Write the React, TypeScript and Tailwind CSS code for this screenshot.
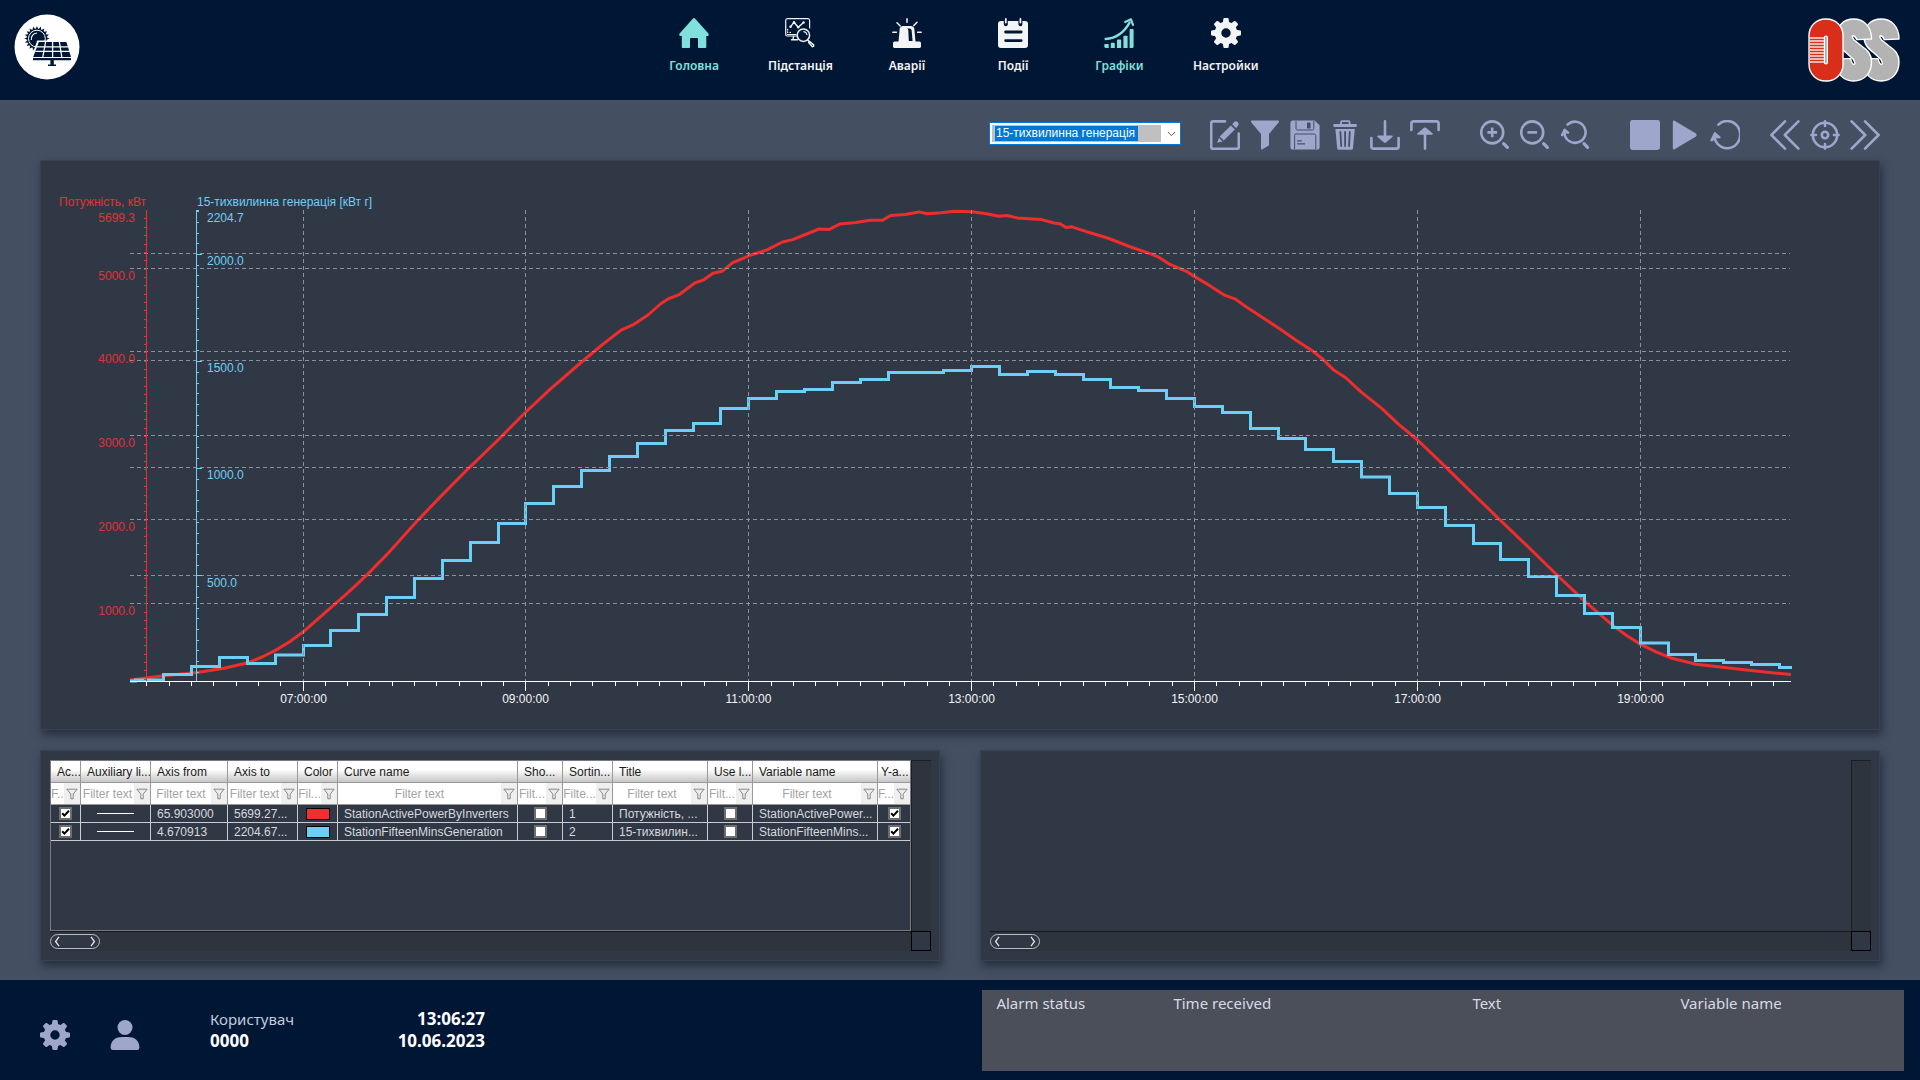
import React from "react";

const NAVY = "#001635";
const SLATE = "#444f62";
const LILAC = "#9ea7cb";
const RED = "#ee2d2d";
const BLUE = "#6ccff6";
const MINT = "#80e0dc";

type IconProps = { className?: string };

function Svg({ children, className = "size-[30px]" }: { children: React.ReactNode; className?: string }) {
  return (
    <svg viewBox="0 0 30 30" className={className} fill="currentColor" stroke="none" aria-hidden="true">
      {children}
    </svg>
  );
}

/* ---------- header icons ---------- */

const HomeIcon = () => (
  <Svg>
    <path d="M15 0Q15.6 0 16.2.7L29.4 15.5Q30.4 18 28.5 18H27.3V29.2Q27.3 30 26.5 30H19.8Q19 30 19 29.2V21Q19 20 18 20H12Q11 20 11 21V29.2Q11 30 10.2 30H3.6Q2.8 30 2.8 29.2V18H1.5Q-.4 18 .6 15.5L13.8.7Q14.4 0 15 0Z" />
  </Svg>
);

const SubstationIcon = () => (
  <Svg>
    <g fill="none" stroke="currentColor" strokeLinecap="round" strokeLinejoin="round">
      <path d="M11 16.5H2.5M.7 9V2.5Q.7.6 2.5.6H22.8Q24.6.6 24.6 2.5V10" strokeWidth="1.2" />
      <path d="M.7 9V16.5Q.7 18 2.2 18H11.5" strokeWidth="1.2" />
      <path d="M2.6 11.5V12M2.6 14V14.4M5 14.4H5.4" strokeWidth="1.3" />
      <path d="M8.5 18.5 8 21.5M6.5 21.8H12.5" strokeWidth="1.4" />
      <path d="M5.5 8.8 9 4.2 13.2 9.2 18.6 4.4" strokeWidth="1.4" />
      <circle cx="18.4" cy="17.2" r="6.2" strokeWidth="1.5" />
      <path d="M18.8 13.6Q21.4 14 22 16.6" strokeWidth="1.1" />
      <path d="M22.6 22 24.2 23.6M24.4 23.2 28.6 26.9Q29.4 28.6 27.4 28.7L23.6 24.6Z" strokeWidth="1.4" />
    </g>
    <g>
      <circle cx="5.5" cy="8.8" r="1.2" />
      <circle cx="9" cy="4.2" r="1.2" />
      <circle cx="13.2" cy="9.2" r="1.2" />
      <circle cx="18.6" cy="4.4" r="1.2" />
    </g>
  </Svg>
);

const AlarmIcon = () => (
  <Svg>
    <path d="M2.5 23.6H27.5Q29 23.8 29 25.3V28.6Q29 30 27.5 30H2.5Q1 30 1 28.6V25.3Q1 23.8 2.5 23.6Z" />
    <path d="M6.5 24 7.7 10.5Q8.2 8 10.8 8H19.2Q21.8 8 22.3 10.5L23.5 24Z" />
    <path d="M15 10.4H17.6Q19.4 10.4 19.6 12.2L20.6 23H16.8L16.3 12Q16.1 10.6 15 10.4Z" fill={NAVY} />
    <path d="M15 .8V4.3M.8 14.3H4.4M25.6 14.3H29.2M5 4.7 8.2 8M25 4.2 21.8 7.6" stroke="currentColor" strokeWidth="1.5" strokeLinecap="round" />
  </Svg>
);

const EventsIcon = () => (
  <Svg>
    <rect x="0" y="3" width="30" height="27" rx="3" />
    <path d="M7.8 2V6.2M22.4 2V6.2" stroke={NAVY} strokeWidth="4" strokeLinecap="round" />
    <path d="M7.8 .9V4.6M22.4 .9V4.6" stroke="currentColor" strokeWidth="1.8" strokeLinecap="round" />
    <path d="M7.6 14H23.2M7.6 22.6H23.2" stroke={NAVY} strokeWidth="2.8" strokeLinecap="round" />
  </Svg>
);

const ChartsIcon = () => (
  <Svg>
    <path d="M.3 26.8Q.3 26 1.1 26H3.9Q4.7 26 4.7 26.8V30H1.6Q.3 30 .3 28.6ZM6.8 25.6Q6.8 24.8 7.6 24.8H10Q10.8 24.8 10.8 25.6V30H6.8ZM13 22.2Q13 21.4 13.8 21.4H16.4Q17.2 21.4 17.2 22.2V30H13ZM19.4 18.6Q19.4 17.8 20.2 17.8H22.8Q23.6 17.8 23.6 18.6V30H19.4ZM25.6 12Q25.6 11 26.6 11H28.6Q29.6 11 29.6 12V28.4Q29.6 30 28.2 30H25.6Z" />
    <path d="M1.6 21Q17 20 25.6 4.6" fill="none" stroke="currentColor" strokeWidth="2.4" strokeLinecap="round" />
    <path d="M21.2 4 27 1.3 29 7" fill="none" stroke="currentColor" strokeWidth="2.2" strokeLinecap="round" strokeLinejoin="round" />
  </Svg>
);

const Gear = ({ className }: IconProps) => (
  <Svg className={className}>
    <circle cx="15" cy="15" r="8" fill="none" stroke="currentColor" strokeWidth="6.6" />
    {[0, 45, 90, 135, 180, 225, 270, 315].map((a) => (
      <path key={a} d="M11.6 6 12.4.8Q12.6 0 13.4 0H16.6Q17.4 0 17.6.8L18.4 6Z" transform={`rotate(${a} 15 15)`} />
    ))}
  </Svg>
);

const Person = () => (
  <Svg>
    <circle cx="15" cy="7.5" r="7.5" />
    <path d="M.6 27.5C.6 20 6 17 12 17H18C24 17 29.4 20 29.4 27.5Q29.4 30 27 30H3Q.6 30 .6 27.5Z" />
  </Svg>
);

/* ---------- toolbar icons ---------- */

const line = { fill: "none", stroke: "currentColor", strokeWidth: 2.6, strokeLinecap: "round", strokeLinejoin: "round" } as const;

const EditIcon = () => (
  <Svg>
    <path {...line} d="M15 1.4H3Q1.2 1.4 1.2 3.2V27Q1.2 28.8 3 28.8H27Q28.8 28.8 28.8 27V13.5" />
    <path d="M9.7 16.6 20.9 5.4 24.9 9.4 13.7 20.6ZM8.9 17.8 12.5 21.4 7.2 22.8ZM22.2 4.2 24.4 1.8Q26 .4 27.8 2Q29.4 3.8 28.2 5.6L26 7.9Z" />
  </Svg>
);

const FilterIcon = () => (
  <Svg>
    <path d="M1.8.6H28.2Q29.6 1 28.6 2.4L19 14V25.2L12.2 29.4Q11 29.8 11 28.4V14L1.4 2.4Q.4 1 1.8.6Z" />
  </Svg>
);

const SaveIcon = () => (
  <Svg>
    <path d="M3 .4H24.6L29.6 5.2V27Q29.6 29.6 27 29.6H3Q.4 29.6 .4 27V3Q.4.4 3 .4Z" />
    <path d="M6 1V8.6Q6 10 7.4 10H22.4Q23.8 10 23.8 8.6V1M4.6 29V15.4Q4.6 14 6 14H24.4Q25.8 14 25.8 15.4V29" fill="none" stroke={SLATE} strokeWidth="1" />
    <rect x="17" y="2.4" width="3.6" height="6" rx=".6" fill={SLATE} />
    <path d="M7.6 20.8H11.4M7.6 23.8H14.6" stroke={SLATE} strokeWidth="1.2" strokeLinecap="round" />
  </Svg>
);

const TrashIcon = () => (
  <Svg>
    <path d="M11 4.6V2.2Q11 1.2 12 1.2H18.6Q19.6 1.2 19.6 2.2V4.6" fill="none" stroke="currentColor" strokeWidth="1.8" />
    <rect x="3.2" y="4" width="23.8" height="3" rx="1.4" />
    <path d="M5.4 9H24.8L23 28.2Q22.8 29.8 21.2 29.8H9Q7.4 29.8 7.2 28.2Z" />
    <path d="M10.4 12 11.2 26M15.1 12V26M19.8 12 19 26" stroke={SLATE} strokeWidth="1.8" strokeLinecap="round" />
  </Svg>
);

const DownloadIcon = () => (
  <Svg>
    <path {...line} d="M1.4 18V26.4Q1.4 28.6 3.6 28.6H26.4Q28.6 28.6 28.6 26.4V18M15 1.4V16" />
    <path d="M8 15.4H22Q23.4 15.8 22.4 17L16 22.4Q15 23.2 14 22.4L7.6 17Q6.6 15.8 8 15.4Z" />
  </Svg>
);

const UploadIcon = () => (
  <Svg>
    <path {...line} d="M1.4 10V3.6Q1.4 1.4 3.6 1.4H26.4Q28.6 1.4 28.6 3.6V10M15 28.6V14" />
    <path d="M8 14.8H22Q23.4 14.4 22.4 13.2L16 7.8Q15 7 14 7.8L7.6 13.2Q6.6 14.4 8 14.8Z" />
  </Svg>
);

const ZoomInIcon = () => (
  <Svg>
    <circle {...line} cx="12.2" cy="12.4" r="11" />
    <path {...line} strokeWidth={3.2} d="M23.6 23.6 27.4 27.4" />
    <path {...line} strokeLinecap="butt" d="M12.2 7.6V17.2M7.4 12.4H17" />
  </Svg>
);

const ZoomOutIcon = () => (
  <Svg>
    <circle {...line} cx="12.2" cy="12.4" r="11" />
    <path {...line} strokeWidth={3.2} d="M23.6 23.6 27.4 27.4" />
    <path {...line} strokeLinecap="butt" d="M7.4 12.4H17" />
  </Svg>
);

const ZoomResetIcon = () => (
  <Svg>
    <path {...line} d="M7.6 4.6A10.6 10.6 0 1 1 4.4 13" />
    <path d="M4 8.6Q4.6 8.2 5.2 8.8L9.4 12.2Q9.8 13.6 8.4 13.8L5.4 13.6 2.4 16.4Q.6 16.4.8 14.8Z" />
    <path {...line} strokeWidth={3.2} d="M24 23.6 27.6 27.4" />
  </Svg>
);

const StopIcon = () => (
  <Svg>
    <rect x="0" y="0" width="30" height="30" rx="2.4" />
  </Svg>
);

const PlayIcon = () => (
  <Svg>
    <path d="M4.6.8 26 13.4Q27.6 15 26 16.6L4.6 29.2Q2.8 30 2.8 28V2Q2.8 0 4.6.8Z" />
  </Svg>
);

const RefreshIcon = () => (
  <Svg>
    <path {...line} d="M8.4 4.6A13 13.6 0 1 1 4.6 18" />
    <path d="M4 12.4Q4.8 11.8 5.6 12.4L10.6 16.8Q11 18.4 9.4 18.6L5.8 18.2 2.4 21.6Q.2 21.8.4 20Z" />
  </Svg>
);

const BackIcon = () => (
  <Svg>
    <path {...line} d="M15 1.4 1.4 15 15 28.6M28.4 1.4 14.8 15 28.4 28.6" />
  </Svg>
);

const ForwardIcon = () => (
  <Svg>
    <path {...line} d="M15 1.4 28.6 15 15 28.6M1.6 1.4 15.2 15 1.6 28.6" />
  </Svg>
);

const TargetIcon = () => (
  <Svg>
    <circle {...line} cx="15" cy="15" r="12.2" />
    <circle {...line} cx="15" cy="15" r="3.2" />
    <path {...line} d="M15 1.4V6M15 24V28.6M1.4 15H6M24 15H28.6" />
  </Svg>
);

/* ---------- logos ---------- */

function SolarLogo() {
  const spikes = Array.from({ length: 20 }, (_, i) => i * 18);
  return (
    <svg viewBox="0 0 66 66" className="size-[66px]" role="img" aria-label="Solar station">
      <circle cx="33" cy="33" r="32.5" fill="#fff" />
      <g fill={NAVY}>
        {spikes.map((a) => (
          <path key={a} d="M21.4 15.4 22.9 12 24.4 15.4Z" transform={`rotate(${a} 22.9 24.6)`} />
        ))}
        <circle cx="22.9" cy="24.6" r="10" />
      </g>
      <circle cx="22.9" cy="24.6" r="8.4" fill="none" stroke="#fff" strokeWidth="1" />
      <path d="M17.4 26A6 6 0 0 1 23 19" fill="none" stroke="#fff" strokeWidth="1.2" />
      <path d="M23.2 26.6H54L59 43.6H17.4Z" fill="#fff" />
      <path d="M24.8 28H52.4L57 43H19.2Z" fill={NAVY} />
      <g stroke="#fff" strokeWidth="1.3">
        <path d="M31.6 28 28.8 43M38.6 28V43M45.4 28 47.8 43" />
        <path d="M23 32.8H54.4M21.4 37.4H56" />
      </g>
      <path d="M19 44H57V46.2H19ZM36.4 46.2H39.8V50.4H42V52H34V50.4H36.4Z" fill={NAVY} />
    </svg>
  );
}

const S_SHAPE =
  "M91 21C91 8 83 1 73 1C63 1 56 8 56 19C56 27 61 31 66 35L73 41.6Q75.4 46 73.4 46.4Q71.6 46.4 70 40.6H56V45C56 56 63 63 73 63C84 63 91 55 91 44C91 36 87 32 81 28L73.6 22Q70.6 18 72.6 17.8Q74.8 18 76.4 21.6Z";

function OssLogo() {
  return (
    <svg viewBox="0 0 92 64" className="h-16 w-[92px]" role="img" aria-label="OSS">
      <g fill="#b3b3b3" stroke="#fff" strokeWidth="1.4" strokeLinejoin="round">
        <path d={S_SHAPE} />
        <path d={S_SHAPE} transform="translate(-27.5 0)" />
      </g>
      <rect x="1" y="1" width="34" height="62" rx="16.5" fill="#d92f1a" stroke="#fff" strokeWidth="1.4" />
      <rect x="16.4" y="18" width="3" height="28" rx="1.5" fill="#a9b0ba" stroke="#fff" strokeWidth="1.2" />
      <path d="M2 20H16M2 23H16M2 26H16M2 29H16M2 32H16M2 35H16M2 38H16M2 41H16M2 44H16" stroke="#f3e3df" strokeWidth="1.3" />
    </svg>
  );
}

/* ---------- chart ---------- */

const X0 = 303;
const HOUR = 111.43;
const TOP = 210;
const BASE = 681.5;

const STEP_LEVELS = [
  680, 674.5, 666.5, 657.5, 663.5, 655, 645.5, 630.5, 614.5, 597.5, 578.5, 560.5, 542.5, 523.5, 503.5, 486.5, 470.5,
  456.5, 443.5, 430.5, 423.5, 408.5, 398.5, 391.5, 389.5, 382.5, 379.5, 372.5, 372.5, 370.5, 366.5, 374.5, 371.5, 374.5,
  379.5, 387.5, 390.5, 398.5, 406.5, 412.5, 428.5, 438.5, 449.5, 461.5, 477, 493.5, 507.5, 525.5, 543.5, 559.5, 576.5,
  595.5, 613.5, 627.5, 643, 654.5, 660.5, 662.5, 664.5, 667.5,
];

const POWER_POINTS =
  "130,680 162,676 197,672.5 224,668.3 248,662.8 262,657 275.5,650.4 290,641.5 303.3,631.8 325.7,612.2 346,594.3 366.5,575.4 387,554.4 417.5,520.6 442,495.1 468.6,468.3 497,441 525.3,412.5 550,389.4 581,362.5 603.3,343.9 621.6,329.8 634,324.3 648,315 660.4,304 668,299 679,294.7 694.7,283 703,280.2 713,273.3 722,271.3 732.7,262.7 741.6,259 748.6,255.8 767,249.9 782.4,242 792.7,239.6 819,229 829.4,229.4 839.6,224.1 856,222.4 870,220.3 882.4,220.3 890.6,215.5 905,214.4 919,211.9 927,213.7 941.6,212.7 954,211.2 972,211.7 986.5,213.7 999,216.2 1007,215.5 1017,217.9 1041.6,219.6 1054,223 1060,223.7 1066,227.5 1072,226.8 1088.6,232.3 1109,238.5 1129.4,246.5 1150,253.7 1158,256.8 1170,264.4 1186.5,271.3 1194.3,276.4 1211,286.4 1225,295.4 1235.5,299.2 1248,308.1 1264,318.4 1280,329 1296,340.2 1312.7,351 1323,359.4 1333,369.4 1346,378 1361.6,392.3 1382,408.6 1398.4,424.1 1417.6,440 1445.3,466.7 1471.8,492.6 1500.4,520.3 1529,547.7 1556.7,574.7 1584,600.6 1612.7,625.4 1627,635.7 1640.4,644.2 1655.5,651.6 1672,658.3 1696,664.2 1729,668 1760,671.6 1791,674.6";

const RED_LABELS: [string, number][] = [
  ["5699.3", 222],
  ["5000.0", 280],
  ["4000.0", 363],
  ["3000.0", 447],
  ["2000.0", 531],
  ["1000.0", 615],
];

const BLUE_LABELS: [string, number][] = [
  ["2204.7", 222],
  ["2000.0", 265],
  ["1500.0", 372],
  ["1000.0", 479],
  ["500.0", 587],
];

function stepPath() {
  const w = HOUR / 4;
  const start = X0 - 6 * w;
  let d = "M130 681";
  STEP_LEVELS.forEach((y, i) => {
    d += `H${Math.floor(start + i * w) + 0.5}V${y}`;
  });
  return d + "H1792";
}

function TrendChart() {
  const hGrid = [253.5, 268.5, 351.5, 360.5, 435.5, 467.5, 519.5, 575.5, 603.5];
  const hours = [7, 9, 11, 13, 15, 17, 19];
  const hourX = (h: number) => Math.floor(X0 + (h - 7) * HOUR) + 0.5;
  const minor = Array.from({ length: 75 }, (_, i) => Math.floor(X0 + (i - 7) * (HOUR / 5)) + 0.5).filter((x) => x < 1790);
  const redTicks = Array.from({ length: 56 }, (_, i) => Math.round(BASE - ((i + 1) * 100 - 65.9) * 0.08368) + 0.5);
  const blueTicks = Array.from({ length: 44 }, (_, i) => Math.round(BASE - ((i + 1) * 50 - 4.67) * 0.21427) + 0.5);
  return (
    <svg
      viewBox="41 161 1838 568"
      className="block h-auto w-full font-['Liberation_Sans',Arial,sans-serif] text-[12px]"
      role="img"
      aria-label="Потужність і 15-тихвилинна генерація"
    >
      <polyline points={POWER_POINTS} fill="none" stroke={RED} strokeWidth="3" strokeLinejoin="round" />
      <path d={stepPath()} fill="none" stroke={BLUE} strokeWidth="3" />
      <g stroke="#87939f" strokeWidth="1" strokeDasharray="4 3" fill="none">
        {hGrid.map((y) => (
          <path key={y} d={`M130 ${y}H1790`} />
        ))}
        {hours.map((h) => (
          <path key={h} d={`M${hourX(h)} ${TOP}V681`} />
        ))}
      </g>
      <g stroke={RED} strokeWidth="1">
        <path d={`M146.5 ${TOP}V681`} />
        {redTicks.map((y) => (
          <path key={y} d={`M144 ${y}H146`} />
        ))}
      </g>
      <g stroke={BLUE} strokeWidth="1">
        <path d={`M196.5 ${TOP}V681M197 210.5H199`} />
        {blueTicks.map((y, i) => (
          <path key={y} d={(i + 1) % 10 === 0 ? `M197 ${y}H202` : `M197 ${y}H199`} />
        ))}
      </g>
      <g stroke="#fff" strokeWidth="1">
        <path d={`M130 ${BASE}H1791`} />
        {minor.map((x) => (
          <path key={x} d={`M${x} 682V686`} />
        ))}
        {hours.map((h) => (
          <path key={h} d={`M${hourX(h)} 682V691`} />
        ))}
      </g>
      <g fill="#e03236" textAnchor="end">
        <text x="146" y="206">Потужність, кВт</text>
        {RED_LABELS.map(([t, y]) => (
          <text key={t} x="135" y={y}>
            {t}
          </text>
        ))}
      </g>
      <g fill="#6ccff6">
        <text x="197" y="206">15-тихвилинна генерація [кВт г]</text>
        {BLUE_LABELS.map(([t, y]) => (
          <text key={t} x="207" y={y}>
            {t}
          </text>
        ))}
      </g>
      <g fill="#f3f4f6" textAnchor="middle">
        {hours.map((h) => (
          <text key={h} x={hourX(h)} y="703">
            {`${String(h).padStart(2, "0")}:00:00`}
          </text>
        ))}
      </g>
    </svg>
  );
}

/* ---------- curve table ---------- */

type Column = { title: string; width: string; label: string; filter: string };

const COLUMNS: Column[] = [
  { title: "Active", label: "Ac...", width: "w-[30px]", filter: "F..." },
  { title: "Auxiliary line", label: "Auxiliary li...", width: "w-[70px]", filter: "Filter text" },
  { title: "Axis from", label: "Axis from", width: "w-[77px]", filter: "Filter text" },
  { title: "Axis to", label: "Axis to", width: "w-[70px]", filter: "Filter text" },
  { title: "Color", label: "Color", width: "w-[40px]", filter: "Fil..." },
  { title: "Curve name", label: "Curve name", width: "w-[180px]", filter: "Filter text" },
  { title: "Show", label: "Sho...", width: "w-[45px]", filter: "Filt..." },
  { title: "Sorting", label: "Sortin...", width: "w-[50px]", filter: "Filte..." },
  { title: "Title", label: "Title", width: "w-[95px]", filter: "Filter text" },
  { title: "Use line", label: "Use l...", width: "w-[45px]", filter: "Filt..." },
  { title: "Variable name", label: "Variable name", width: "w-[125px]", filter: "Filter text" },
  { title: "Y-axis", label: "Y-a...", width: "", filter: "F..." },
];

const ROWS = [
  { from: "65.903000", to: "5699.27...", swatch: "bg-[#f0302f]", name: "StationActivePowerByInverters", sort: "1", title: "Потужність, ...", variable: "StationActivePower..." },
  { from: "4.670913", to: "2204.67...", swatch: "bg-[#6ccff6]", name: "StationFifteenMinsGeneration", sort: "2", title: "15-тихвилин...", variable: "StationFifteenMins..." },
];

function Tick({ checked, label }: { checked?: boolean; label: string }) {
  return (
    <span className="relative mx-auto block size-[13px] bg-[#6e6e6e] p-[2px]">
      <input
        type="checkbox"
        defaultChecked={checked}
        aria-label={label}
        className="peer block size-[9px] appearance-none bg-white"
      />
      <svg viewBox="0 0 9 9" className="pointer-events-none absolute top-[2px] left-[2px] hidden size-[9px] peer-checked:block" aria-hidden="true">
        <path d="M1.2 4.2 3.4 6.6 8 1.8" fill="none" stroke="#000" strokeWidth="2" />
      </svg>
    </span>
  );
}

function FunnelGlyph() {
  return (
    <svg viewBox="0 0 12 12" className="size-3" fill="#ececec" stroke="#8a8a8a" strokeWidth="1" aria-hidden="true">
      <path d="M.8 1.2H11.2L7.2 6V10.8H4.8V6Z" />
    </svg>
  );
}

const cell = "truncate border-r border-b border-[#c9ccd1] pl-[6px]";

function CurveTable() {
  return (
    <table className="w-full table-fixed border-separate border-spacing-0 text-[12px] leading-[14px]">
      <colgroup>
        {COLUMNS.map((c) => (
          <col key={c.title} className={c.width} />
        ))}
      </colgroup>
      <thead>
        <tr>
          {COLUMNS.map((c) => (
            <th
              key={c.title}
              scope="col"
              className="h-[22px] overflow-hidden border-r border-b border-[#999] bg-linear-to-b from-white from-40% to-[#c6c6c6] pl-[6px] text-left font-normal whitespace-nowrap text-[#1a1a1a] last:border-r-0 last:pl-[3px]"
            >
              {c.label}
            </th>
          ))}
        </tr>
        <tr>
          {COLUMNS.map((c) => (
            <td key={c.title} className="h-[22px] border-r border-b border-[#999] bg-white p-0 last:border-r-0">
              <div className="flex h-[21px] items-stretch">
                <input
                  type="text"
                  placeholder={c.filter}
                  aria-label={`Filter ${c.title}`}
                  className="w-0 min-w-0 flex-1 bg-white text-center placeholder:text-[#a3a3a3]"
                />
                <button type="button" aria-label={`Filter options ${c.title}`} className="flex w-4 shrink-0 items-center justify-center bg-[#efefef]">
                  <FunnelGlyph />
                </button>
              </div>
            </td>
          ))}
        </tr>
      </thead>
      <tbody className="text-[#d6d9de]">
        {ROWS.map((r) => (
          <tr key={r.name} className="h-[18px]">
            <td className="border-r border-b border-[#c9ccd1]">
              <Tick checked label={`Active ${r.name}`} />
            </td>
            <td className="border-r border-b border-[#c9ccd1]">
              <hr className="mx-auto w-[37px] border-t border-white" />
            </td>
            <td className={cell}>{r.from}</td>
            <td className={cell}>{r.to}</td>
            <td className="border-r border-b border-[#c9ccd1]">
              <div className={`mx-auto h-3 w-6 border border-black ${r.swatch}`} />
            </td>
            <td className={cell}>{r.name}</td>
            <td className="border-r border-b border-[#c9ccd1]">
              <Tick label={`Show ${r.name}`} />
            </td>
            <td className={cell}>{r.sort}</td>
            <td className={cell}>{r.title}</td>
            <td className="border-r border-b border-[#c9ccd1]">
              <Tick label={`Use ${r.name}`} />
            </td>
            <td className={cell}>{r.variable}</td>
            <td className="border-b border-[#c9ccd1]">
              <Tick checked label={`Y-axis ${r.name}`} />
            </td>
          </tr>
        ))}
      </tbody>
    </table>
  );
}

function ScrollPanel({ framed, children }: { framed?: boolean; children?: React.ReactNode }) {
  return (
    <section className="grid h-[211px] min-w-0 grid-cols-[minmax(0,1fr)_20px] grid-rows-[minmax(0,1fr)_20px] border border-[#3a414e] bg-[#313845] pt-[9px] pr-2 pb-[9px] pl-[9px] shadow-[2px_5px_8px_rgba(20,26,38,0.6)]">
      <div className={framed ? "overflow-hidden border border-[#777a80]" : ""}>{children}</div>
      <div className="border-t border-l border-[#1a1e25] bg-[#2d343d]" />
      <div className="flex items-center border-t border-[#15181d] bg-[#2d343d]">
        <button
          type="button"
          aria-label="Scroll horizontally"
          className="flex h-[15px] w-[50px] items-center justify-between rounded-full border border-[#b9bcc1] bg-[#313845] px-[3px]"
        >
          <svg viewBox="0 0 6 11" className="h-[11px] w-[6px]" fill="none" stroke="#e3e5e9" strokeWidth="1.3" aria-hidden="true">
            <path d="M5 .8 1.6 5.5 5 10.2" />
          </svg>
          <svg viewBox="0 0 6 11" className="h-[11px] w-[6px]" fill="none" stroke="#e3e5e9" strokeWidth="1.3" aria-hidden="true">
            <path d="M1 .8 4.4 5.5 1 10.2" />
          </svg>
        </button>
      </div>
      <div className="border border-black" />
    </section>
  );
}

/* ---------- page ---------- */

const NAV = [
  { label: "Головна", icon: <HomeIcon />, active: true },
  { label: "Підстанція", icon: <SubstationIcon /> },
  { label: "Аварії", icon: <AlarmIcon /> },
  { label: "Події", icon: <EventsIcon /> },
  { label: "Графіки", icon: <ChartsIcon />, active: true },
  { label: "Настройки", icon: <Gear /> },
];

const TOOLS = [
  { key: "file", items: [["Edit", <EditIcon />], ["Filter", <FilterIcon />], ["Save", <SaveIcon />], ["Delete", <TrashIcon />], ["Import", <DownloadIcon />], ["Export", <UploadIcon />]] },
  { key: "zoom", items: [["Zoom in", <ZoomInIcon />], ["Zoom out", <ZoomOutIcon />], ["Reset zoom", <ZoomResetIcon />]] },
  { key: "run", items: [["Stop", <StopIcon />], ["Play", <PlayIcon />], ["Refresh", <RefreshIcon />]] },
  { key: "move", items: [["Back", <BackIcon />], ["Now", <TargetIcon />], ["Forward", <ForwardIcon />]] },
] as { key: string; items: [string, React.ReactNode][] }[];

export default function App() {
  return (
    <div className="flex min-h-screen flex-col bg-[#444f62] font-['Noto_Sans','Open_Sans',sans-serif]">
      <header className="grid h-[100px] shrink-0 grid-cols-[1fr_auto_1fr] items-start bg-[#001635]">
        <div className="pt-[14px] pl-[14px]">
          <SolarLogo />
        </div>
        <nav className="grid w-[638px] grid-cols-6 pt-[18px]">
          {NAV.map((n) => (
            <a
              key={n.label}
              href="#"
              className="flex flex-col items-center gap-[9px] text-[12px] leading-[18px] font-semibold"
              style={{ color: n.active ? MINT : "#f3f4f6" }}
            >
              {n.icon}
              <span>{n.label}</span>
            </a>
          ))}
        </nav>
        <div className="flex justify-end pt-[18px] pr-5">
          <OssLogo />
        </div>
      </header>

      <main className="flex flex-1 flex-col px-10 pb-[19px]">
        <div className="flex h-[60px] shrink-0 items-center justify-end pt-[10px] text-[#9ea7cb]">
          <div className="relative mr-[29px] mb-1 flex h-[23px] w-[192px] border border-[#0078d7] bg-white p-[2px] font-['Liberation_Sans',Arial,sans-serif] text-[12px]">
            <select
              aria-label="Curve set"
              className="h-[17px] w-[169px] appearance-none bg-[#c0c0c0] bg-linear-to-r from-[#0078d7] to-[#0078d7] bg-[length:143px_15px] bg-[position:3px_1px] bg-no-repeat pl-1 leading-[15px] text-white"
            >
              <option>15-тихвилинна генерація</option>
            </select>
            <svg viewBox="0 0 10 6" className="pointer-events-none absolute top-2 right-1 h-[6px] w-[9px]" fill="none" stroke="#444" aria-hidden="true">
              <path d="M1 .8 5 4.8 9 .8" />
            </svg>
          </div>
          <div className="flex">
            {TOOLS.map((g) => (
              <div key={g.key} className="ml-10 flex gap-[10px] first:ml-0 last:ml-[30px]">
                {g.items.map(([label, icon]) => (
                  <button key={label} type="button" aria-label={label}>
                    {icon}
                  </button>
                ))}
              </div>
            ))}
          </div>
        </div>

        <section className="border border-[#3a414e] bg-[#313845] shadow-[2px_5px_8px_rgba(20,26,38,0.6)]">
          <TrendChart />
        </section>

        <div className="mt-5 grid grid-cols-2 gap-10 font-['Liberation_Sans',Arial,sans-serif]">
          <ScrollPanel framed>
            <CurveTable />
          </ScrollPanel>
          <ScrollPanel />
        </div>
      </main>

      <footer className="flex h-[100px] shrink-0 items-start justify-between bg-[#001635]">
        <div className="flex items-start pl-10" style={{ color: LILAC }}>
          <button type="button" aria-label="Settings" className="mt-10">
            <Gear />
          </button>
          <button type="button" aria-label="User" className="mt-10 ml-10">
            <Person />
          </button>
          <div className="mt-7 ml-[70px] w-[150px] leading-[22px]">
            <div className="text-[15px] text-[#c3cbdc]">Користувач</div>
            <div className="text-[17px] font-bold text-white">0000</div>
          </div>
          <div className="mt-7 w-[125px] text-right text-[17px] leading-[22px] font-bold text-white">
            <div>13:06:27</div>
            <div>10.06.2023</div>
          </div>
        </div>
        <div className="mt-[10px] mr-4 h-[81px] w-[48%] bg-[#4a4f5a]">
          <table className="w-full table-fixed text-[15px] leading-[22px] text-[#d8dbe2]">
            <colgroup>
              <col className="w-[177px]" />
              <col className="w-[299px]" />
              <col className="w-[208px]" />
              <col />
            </colgroup>
            <thead>
              <tr>
                {["Alarm status", "Time received", "Text", "Variable name"].map((t) => (
                  <th key={t} scope="col" className="pt-[2px] pl-[14px] text-left font-normal">
                    {t}
                  </th>
                ))}
              </tr>
            </thead>
          </table>
        </div>
      </footer>
    </div>
  );
}
